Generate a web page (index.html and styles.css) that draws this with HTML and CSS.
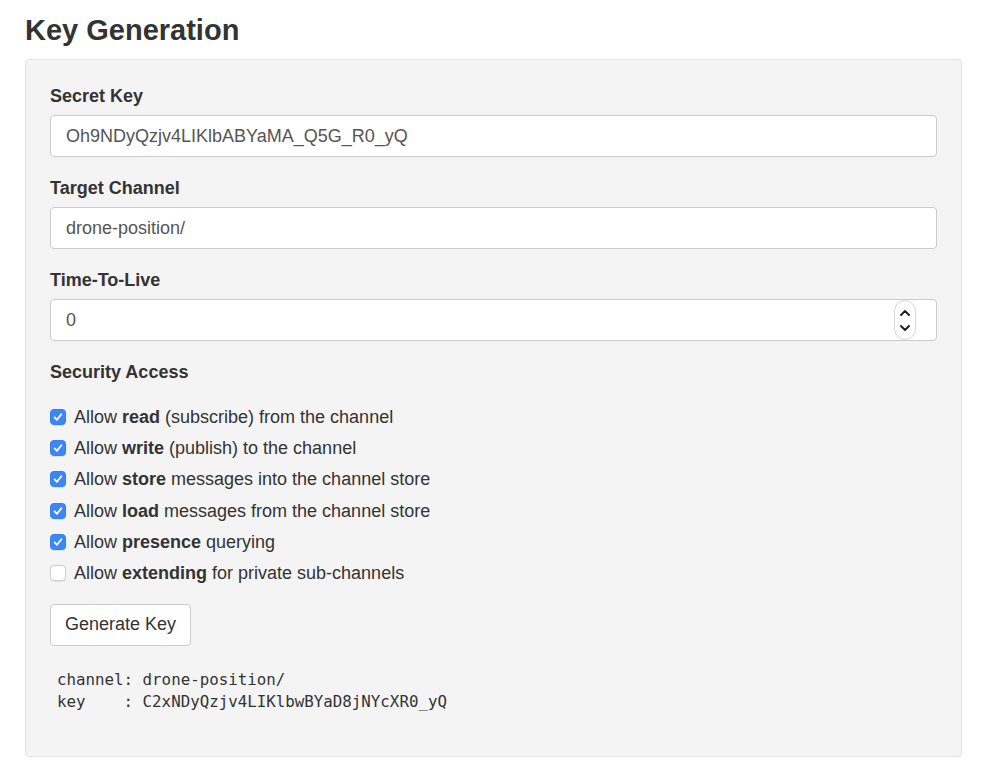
FILE: index.html
```html
<!DOCTYPE html>
<html lang="en">
<head>
<meta charset="utf-8">
<title>Key Generation</title>
<link rel="stylesheet" href="styles.css">
</head>
<body>
<div class="page">
  <h1 class="title">Key Generation</h1>
  <div class="well">
    <div class="group">
      <label class="label" for="secret">Secret Key</label>
      <input class="control" id="secret" type="text" value="Oh9NDyQzjv4LIKlbABYaMA_Q5G_R0_yQ">
    </div>
    <div class="group">
      <label class="label" for="channel">Target Channel</label>
      <input class="control" id="channel" type="text" value="drone-position/">
    </div>
    <div class="group">
      <label class="label" for="ttl">Time-To-Live</label>
      <div class="control number">
        <input class="number-input" id="ttl" type="text" value="0">
        <span class="stepper">
          <svg width="24" height="42" viewBox="0 0 24 42" aria-hidden="true">
            <rect x="1.5" y="1.5" width="21" height="39" rx="10.5" fill="#fff" stroke="#d6d6d6"/>
            <path d="M8 16 L12 12 L16 16" fill="none" stroke="#222" stroke-width="2" stroke-linecap="round" stroke-linejoin="round"/>
            <path d="M8 27 L12 31 L16 27" fill="none" stroke="#222" stroke-width="2" stroke-linecap="round" stroke-linejoin="round"/>
          </svg>
        </span>
      </div>
    </div>
    <div class="label">Security Access</div>
    <ul class="checks">
      <li class="check-row"><span class="box on"><svg width="16" height="16" viewBox="0 0 16 16"><path d="M4.6 8.4 L7 10.8 L11.4 5.2" fill="none" stroke="#fff" stroke-width="1.8" stroke-linecap="round" stroke-linejoin="round"/></svg></span><span>Allow <b>read</b> (subscribe) from the channel</span></li>
      <li class="check-row"><span class="box on"><svg width="16" height="16" viewBox="0 0 16 16"><path d="M4.6 8.4 L7 10.8 L11.4 5.2" fill="none" stroke="#fff" stroke-width="1.8" stroke-linecap="round" stroke-linejoin="round"/></svg></span><span>Allow <b>write</b> (publish) to the channel</span></li>
      <li class="check-row"><span class="box on"><svg width="16" height="16" viewBox="0 0 16 16"><path d="M4.6 8.4 L7 10.8 L11.4 5.2" fill="none" stroke="#fff" stroke-width="1.8" stroke-linecap="round" stroke-linejoin="round"/></svg></span><span>Allow <b>store</b> messages into the channel store</span></li>
      <li class="check-row"><span class="box on"><svg width="16" height="16" viewBox="0 0 16 16"><path d="M4.6 8.4 L7 10.8 L11.4 5.2" fill="none" stroke="#fff" stroke-width="1.8" stroke-linecap="round" stroke-linejoin="round"/></svg></span><span>Allow <b>load</b> messages from the channel store</span></li>
      <li class="check-row"><span class="box on"><svg width="16" height="16" viewBox="0 0 16 16"><path d="M4.6 8.4 L7 10.8 L11.4 5.2" fill="none" stroke="#fff" stroke-width="1.8" stroke-linecap="round" stroke-linejoin="round"/></svg></span><span>Allow <b>presence</b> querying</span></li>
      <li class="check-row"><span class="box"></span><span>Allow <b>extending</b> for private sub-channels</span></li>
    </ul>
    <button class="btn" type="button">Generate Key</button>
    <pre class="result">channel: drone-position/
key    : C2xNDyQzjv4LIKlbwBYaD8jNYcXR0_yQ</pre>
  </div>
</div>
</body>
</html>
```

FILE: styles.css
```css
* { box-sizing: border-box; }

html, body {
  margin: 0;
  padding: 0;
  background: #fff;
}

body {
  font-family: "Liberation Sans", Arial, sans-serif;
  font-size: 18px;
  line-height: 26px;
  color: #333;
}

.page {
  padding: 0 21px 0 25px;
}

.title {
  margin: 14px 0 13px;
  font-size: 29px;
  line-height: 32px;
  font-weight: bold;
  color: #333;
}

.well {
  background: #f4f4f4;
  border: 1px solid #e3e3e3;
  border-radius: 4px;
  padding: 23px 24px 24px;
}

.group {
  margin-bottom: 18px;
}

.label {
  display: block;
  font-weight: bold;
  font-size: 18px;
  line-height: 26px;
  margin-bottom: 6px;
}

.control {
  display: block;
  width: 100%;
  height: 42px;
  padding: 0 15px;
  font-family: "Liberation Sans", Arial, sans-serif;
  font-size: 18px;
  color: #555;
  background: #fff;
  border: 1px solid #ccc;
  border-radius: 4px;
  outline: none;
}

.number {
  display: flex;
  align-items: center;
  padding-right: 19px;
}

.number-input {
  flex: 1;
  min-width: 0;
  border: 0;
  padding: 0;
  background: transparent;
  font-family: inherit;
  font-size: 18px;
  color: #555;
  outline: none;
}

.stepper {
  display: flex;
  width: 24px;
  height: 42px;
}

.checks {
  list-style: none;
  margin: 19px 0 0;
  padding: 0;
  display: flex;
  flex-direction: column;
  gap: 5.2px;
}

.check-row {
  display: flex;
  align-items: center;
  gap: 8px;
  line-height: 26px;
}

.box {
  display: flex;
  width: 16px;
  height: 16px;
  flex: none;
  border-radius: 4px;
  background: #fff;
  border: 1px solid #cfcfcf;
  box-shadow: 0 0.5px 1px rgba(0, 0, 0, 0.08);
}

.box.on {
  background: #3b87f5;
  border-color: #3580ee;
}

.box svg {
  margin: -1px;
}

.btn {
  display: block;
  margin-top: 18px;
  height: 42px;
  padding: 0 14px;
  font-family: "Liberation Sans", Arial, sans-serif;
  font-size: 18px;
  color: #333;
  background: #fff;
  border: 1px solid #ccc;
  border-radius: 4px;
}

.result {
  margin: 23px 0 19px;
  padding: 0 7px;
  font-family: "DejaVu Sans Mono", "Liberation Mono", monospace;
  font-size: 15.8px;
  line-height: 22px;
  color: #333;
  background: transparent;
  border: 0;
}
```
